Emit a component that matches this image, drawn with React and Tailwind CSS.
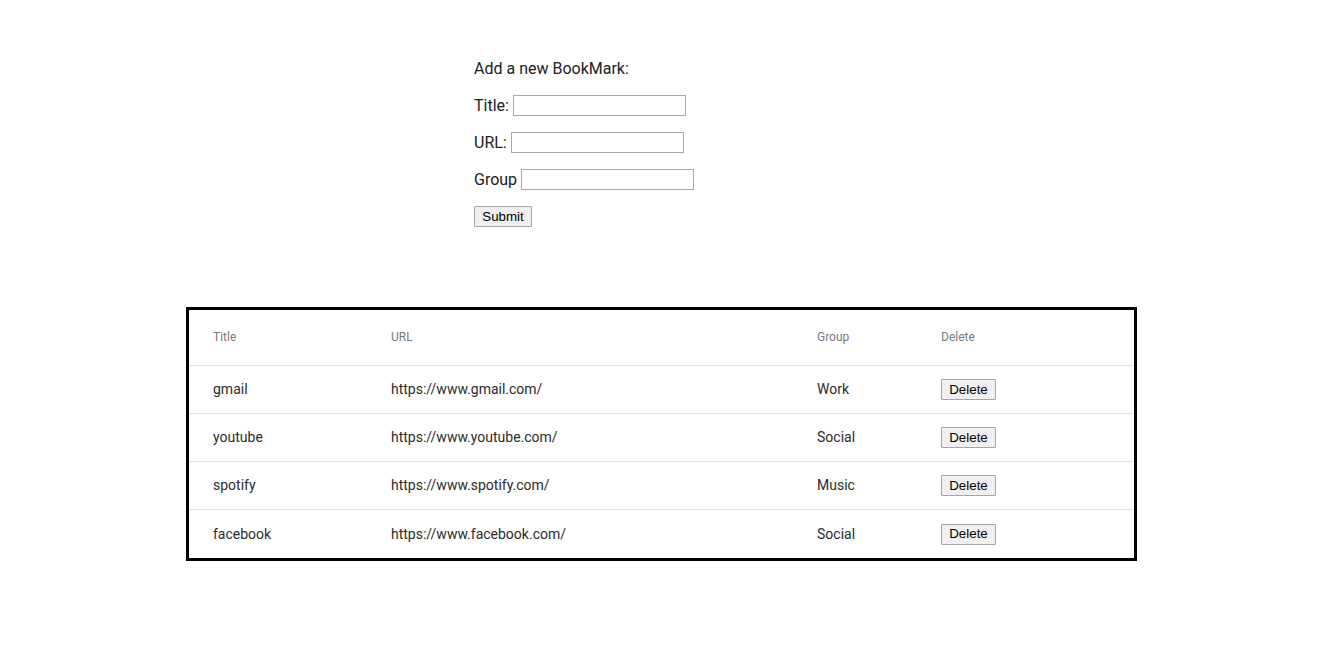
import React from "react";

const rows = [
  { title: "gmail", url: "https://www.gmail.com/", group: "Work" },
  { title: "youtube", url: "https://www.youtube.com/", group: "Social" },
  { title: "spotify", url: "https://www.spotify.com/", group: "Music" },
  { title: "facebook", url: "https://www.facebook.com/", group: "Social" },
];

function Btn({ children, w }) {
  return (
    <button
      className={`${w} h-[21px] border border-[#a6a6a6] bg-[#f0f0f0] rounded-[1px] text-[13.33px] text-black flex items-center justify-center`}
      style={{ fontFamily: '"Liberation Sans", Arial, sans-serif' }}
    >
      {children}
    </button>
  );
}

export default function App() {
  return (
    <div
      className="w-[1332px] min-h-[655px] bg-white text-black"
      style={{ fontFamily: 'Roboto, "Noto Sans", sans-serif' }}
    >
      <div className="pt-[58px] pl-[474px] flex flex-col gap-[16px] text-[16px] text-[#212121]">
        <div className="h-[21px] flex items-center">Add a new BookMark:</div>
        <div className="h-[21px] flex items-center gap-[4px]">
          <span>Title:</span>
          <input className="w-[173px] h-[21px] border border-[#a9a9a9] bg-white outline-none" />
        </div>
        <div className="h-[21px] flex items-center gap-[4px]">
          <span>URL:</span>
          <input className="w-[173px] h-[21px] border border-[#a9a9a9] bg-white outline-none" />
        </div>
        <div className="h-[21px] flex items-center gap-[4px]">
          <span>Group</span>
          <input className="w-[173px] h-[21px] border border-[#a9a9a9] bg-white outline-none" />
        </div>
        <div className="h-[21px] flex items-center">
          <Btn w="w-[58px]">Submit</Btn>
        </div>
      </div>

      <div className="mt-[80px] ml-[186px] w-[951px] border-[3px] border-black">
        <div className="grid grid-cols-[178px_426px_124px_1fr] h-[56px] border-b border-[#e0e0e0] items-center text-[12px] text-[#7a7a7a]">
          <div className="pl-[24px] -mt-[2px]">Title</div>
          <div className="pl-[24px] -mt-[2px]">URL</div>
          <div className="pl-[24px] -mt-[2px]">Group</div>
          <div className="pl-[24px] -mt-[2px]">Delete</div>
        </div>
        {rows.map((r, i) => (
          <div
            key={i}
            className={`grid grid-cols-[178px_426px_124px_1fr] h-[48px] items-center text-[14px] text-[#2b2b2b] ${
              i < rows.length - 1 ? "border-b border-[#e0e0e0]" : ""
            }`}
          >
            <div className="pl-[24px]">{r.title}</div>
            <div className="pl-[24px]">{r.url}</div>
            <div className="pl-[24px]">{r.group}</div>
            <div className="pl-[24px] flex">
              <Btn w="w-[55px]">Delete</Btn>
            </div>
          </div>
        ))}
      </div>
    </div>
  );
}
